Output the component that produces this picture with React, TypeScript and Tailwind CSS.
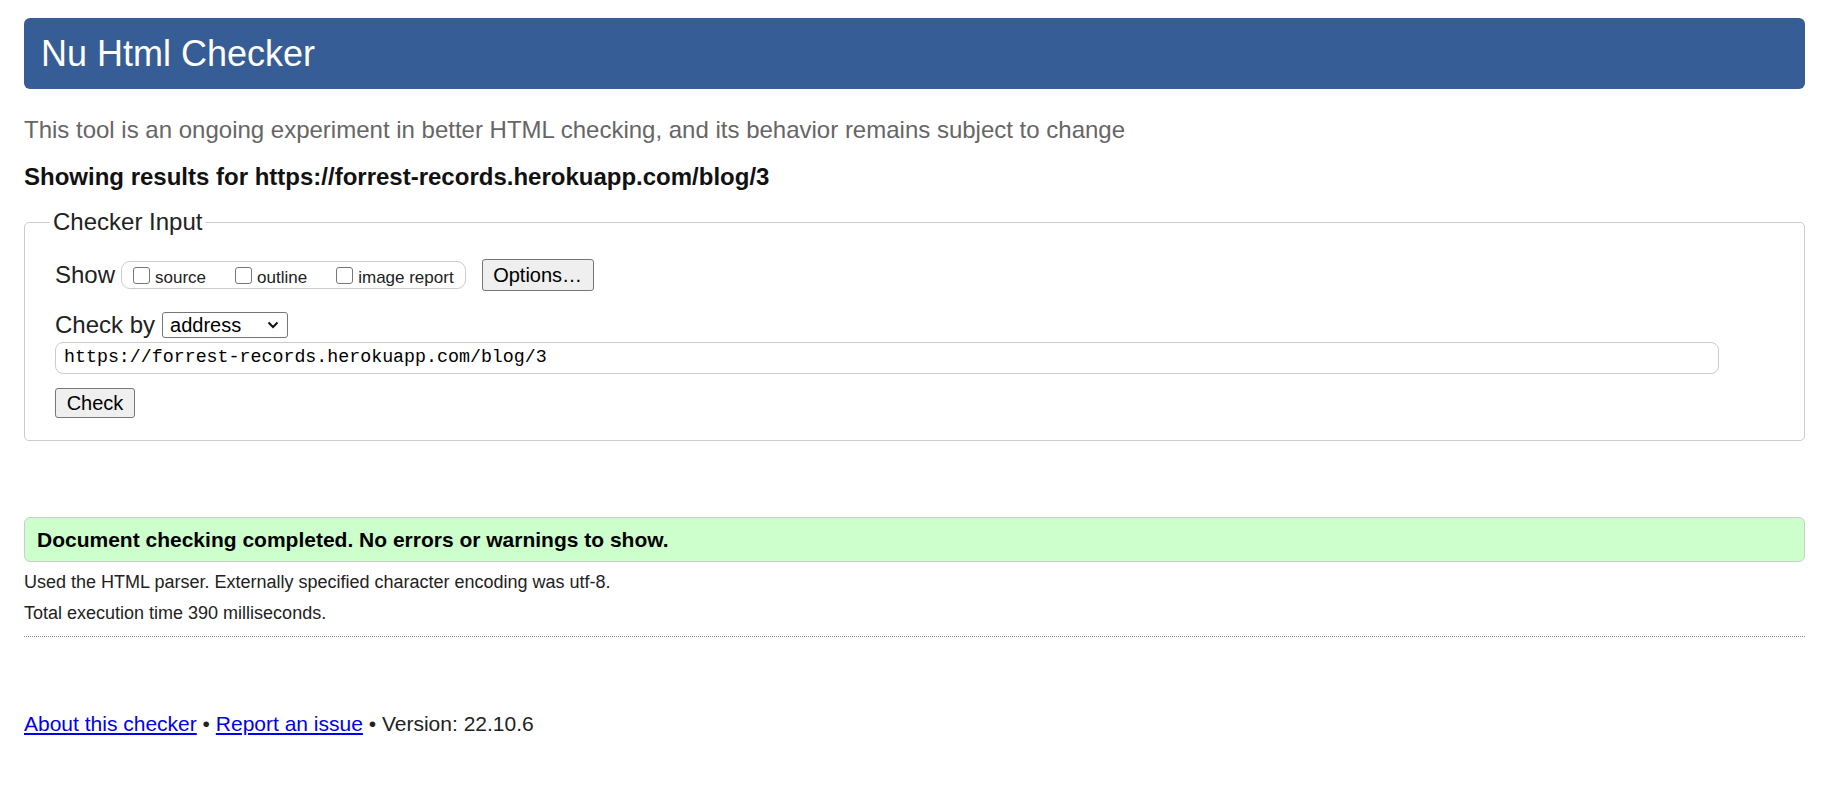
import { useState } from "react";

function Checkbox({ label }: { label: string }) {
  return (
    <label className="flex items-center">
      <span className="h-[17px] w-[17px] rounded-[3px] border border-[#767676] bg-white" />
      <span className="ml-[5px] mt-[6px] text-[17px] leading-[20px]">{label}</span>
    </label>
  );
}

function Button({ children, className }: { children: React.ReactNode; className?: string }) {
  return (
    <button
      type="button"
      className={`flex items-center justify-center rounded-[3px] border border-[#767676] bg-[#efefef] text-[20px] leading-none text-black ${className ?? ""}`}
    >
      {children}
    </button>
  );
}

export default function App() {
  const [url] = useState("https://forrest-records.herokuapp.com/blog/3");

  return (
    <div className="min-h-[792px] bg-white pl-[24px] pr-[26px] pt-[18px] font-['Liberation_Sans',Arial,sans-serif] text-[#222]">
      <header className="flex h-[71px] items-center rounded-[6px] bg-[#365d95] pl-[17px]">
        <h1 className="text-[36px] leading-none text-white">Nu Html Checker</h1>
      </header>

      <p className="mt-[27px] text-[24px] leading-[28px] text-[#666]">
        This tool is an ongoing experiment in better HTML checking, and its behavior remains subject to change
      </p>

      <p className="mt-[19px] text-[24px] font-bold leading-[28px] text-[#111]">
        Showing results for {url}
      </p>

      <fieldset className="mt-[17px] rounded-[5px] border border-[#cccccc] pb-[22px] pl-[25px] pr-[30px] pt-[23px]">
        <legend className="px-[3px] text-[24px] leading-[28px]">Checker Input</legend>
        <div className="pl-[5px]">
          <div className="flex h-[32px] items-center">
            <span className="text-[24px] leading-[28px]">Show</span>
            <div className="ml-[6px] flex h-[28px] items-center gap-[29px] rounded-[9px] border border-[#cccccc] pl-[11px] pr-[11px]">
              <Checkbox label="source" />
              <Checkbox label="outline" />
              <Checkbox label="image report" />
            </div>
            <Button className="ml-[16px] h-[32px] w-[112px]">Options…</Button>
          </div>

          <div className="mt-[20px] flex h-[28px] items-center">
            <span className="text-[24px] leading-[28px]">Check by</span>
            <div className="ml-[7px] flex h-[26px] w-[126px] items-center justify-between rounded-[3px] border border-[#767676] bg-white pl-[7px] pr-[8px] text-[20px] text-black">
              <span>address</span>
              <svg width="12" height="8" viewBox="0 0 12 8" fill="none">
                <path d="M1.5 1.5 L6 6 L10.5 1.5" stroke="#111" strokeWidth="2" />
              </svg>
            </div>
          </div>

          <div className="mt-[3px] flex h-[32px] w-[1664px] items-center rounded-[8px] border border-[#cccccc] pl-[8px] font-['Liberation_Mono',monospace] text-[18.3px] text-black">
            {url}
          </div>

          <Button className="mt-[14px] h-[30px] w-[80px]">Check</Button>
        </div>
      </fieldset>

      <div className="mt-[76px] flex h-[45px] items-center rounded-[6px] border border-[#cccccc] bg-[#ccffcc] pl-[12px]">
        <p className="text-[21px] font-bold text-black">
          Document checking completed. No errors or warnings to show.
        </p>
      </div>

      <p className="mt-[8px] text-[18px] leading-[24px]">
        Used the HTML parser. Externally specified character encoding was utf-8.
      </p>
      <p className="mt-[7px] text-[18px] leading-[24px]">Total execution time 390 milliseconds.</p>

      <hr className="mt-[11px] border-0 border-t border-dotted border-[#888]" />

      <p className="mt-[73px] text-[21px] leading-[28px]">
        <a href="#" className="text-[#0000ee] underline">
          About this checker
        </a>{" "}
        •{" "}
        <a href="#" className="text-[#0000ee] underline">
          Report an issue
        </a>{" "}
        • Version: 22.10.6
      </p>
    </div>
  );
}
